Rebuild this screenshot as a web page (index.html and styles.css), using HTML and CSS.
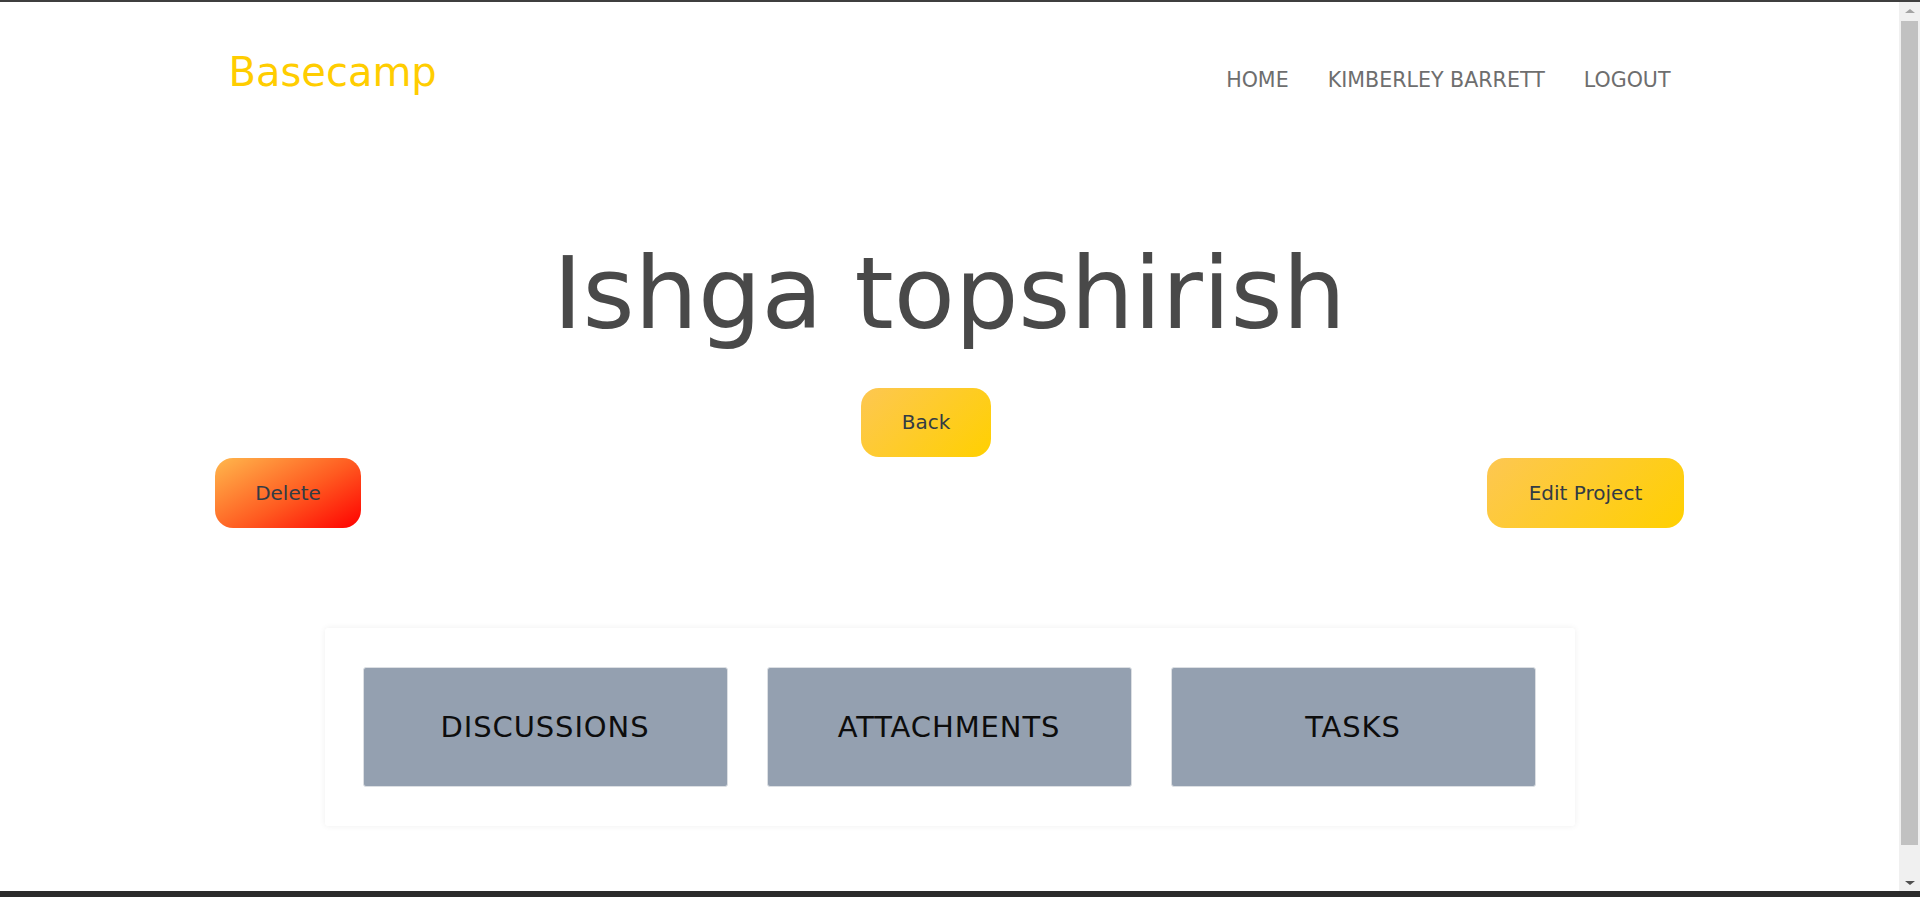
FILE: index.html
```html
<!DOCTYPE html>
<html lang="en">
<head>
<meta charset="utf-8">
<title>Basecamp – Ishga topshirish</title>
<link rel="stylesheet" href="styles.css">
</head>
<body>
<div class="frame">
  <div class="frame-top"></div>
  <div class="viewport">
    <main class="page">
      <header class="header">
        <a class="logo" href="#">Basecamp</a>
        <nav class="nav">
          <a class="nav-link" href="#">HOME</a>
          <a class="nav-link" href="#">KIMBERLEY BARRETT</a>
          <a class="nav-link" href="#">LOGOUT</a>
        </nav>
      </header>

      <h1 class="title">Ishga topshirish</h1>

      <div class="back-row">
        <a class="btn btn-yellow btn-back" href="#">Back</a>
      </div>

      <div class="actions-row">
        <a class="btn btn-red btn-delete" href="#">Delete</a>
        <a class="btn btn-yellow btn-edit" href="#">Edit Project</a>
      </div>

      <section class="card">
        <a class="tile" href="#">DISCUSSIONS</a>
        <a class="tile" href="#">ATTACHMENTS</a>
        <a class="tile" href="#">TASKS</a>
      </section>
    </main>
    <div class="scrollbar">
      <div class="sb-btn sb-up"><span class="tri tri-up"></span></div>
      <div class="sb-thumb"></div>
      <div class="sb-space"></div>
      <div class="sb-btn sb-down"><span class="tri tri-down"></span></div>
    </div>
  </div>
  <div class="frame-bottom"></div>
</div>
</body>
</html>
```

FILE: styles.css
```css
* { box-sizing: border-box; }

html, body {
  margin: 0;
  padding: 0;
  height: 100%;
  overflow: hidden;
  background: #ffffff;
  font-family: "DejaVu Sans", "Liberation Sans", sans-serif;
}

a { text-decoration: none; }

.frame {
  height: 100vh;
  display: flex;
  flex-direction: column;
}

.frame-top {
  height: 2px;
  background: #3f3f3f;
  flex: none;
}

.frame-bottom {
  height: 6px;
  background: #2b2b2b;
  flex: none;
}

.viewport {
  flex: 1;
  display: flex;
  min-height: 0;
}

.page {
  flex: 1;
  min-width: 0;
  overflow: hidden;
}

/* Header */
.header {
  width: 1442px;
  margin: 46px auto 0;
  display: flex;
  justify-content: space-between;
  align-items: baseline;
}

.logo {
  font-size: 40px;
  line-height: 48px;
  color: #ffcd00;
}

.nav {
  display: flex;
  gap: 39px;
  position: relative;
  top: 1px;
}

.nav-link {
  font-size: 20.6px;
  line-height: 24px;
  color: #6e6e6e;
}

/* Title */
.title {
  margin: 138px 0 0;
  text-align: center;
  font-size: 100px;
  line-height: 120px;
  font-weight: 400;
  color: #494949;
}

/* Buttons */
.btn {
  display: inline-flex;
  align-items: center;
  justify-content: center;
  font-size: 20px;
  line-height: 25px;
  color: #333b44;
  border-radius: 18px;
}

.btn-yellow {
  background: linear-gradient(135deg, #fdc752 0%, #ffd000 100%);
}

.btn-red {
  background: linear-gradient(150deg, #ffb84d 0%, #ff5a20 55%, #ff0000 100%);
}

.back-row {
  margin-top: 34px;
  display: flex;
  justify-content: center;
}

.btn-back {
  width: 130px;
  height: 69px;
  margin-right: 47px;
}

.actions-row {
  width: 1469px;
  margin: 1px auto 0;
  display: flex;
  justify-content: space-between;
}

.btn-delete {
  width: 146px;
  height: 70px;
}

.btn-edit {
  width: 197px;
  height: 70px;
}

/* Card with tiles */
.card {
  width: 1250px;
  margin: 100px auto 0;
  padding: 39px 39px 39px 38px;
  display: grid;
  grid-template-columns: repeat(3, 365px);
  gap: 39px;
  background: #ffffff;
  box-shadow: 0 0 6px rgba(0, 0, 0, 0.07);
  border-radius: 3px;
}

.tile {
  height: 120px;
  display: flex;
  align-items: center;
  justify-content: center;
  background: #94a0b0;
  border: 1px solid #dcdfe3;
  border-radius: 3px;
  font-size: 29px;
  letter-spacing: 0.9px;
  color: #0d0d0d;
}

/* Fake scrollbar */
.scrollbar {
  width: 21px;
  flex: none;
  background: #f0f0f0;
  display: flex;
  flex-direction: column;
}

.sb-btn {
  height: 17px;
  flex: none;
  display: flex;
  align-items: center;
  justify-content: center;
}

.sb-thumb {
  height: 824px;
  margin: 2px 2px 0;
  background: #c1c1c1;
  flex: none;
}

.sb-space { flex: 1; }

.tri {
  width: 0;
  height: 0;
  border-left: 5px solid transparent;
  border-right: 5px solid transparent;
}

.tri-up { border-bottom: 4px solid #a3a3a3; }
.tri-down { border-top: 4px solid #505050; }
```
